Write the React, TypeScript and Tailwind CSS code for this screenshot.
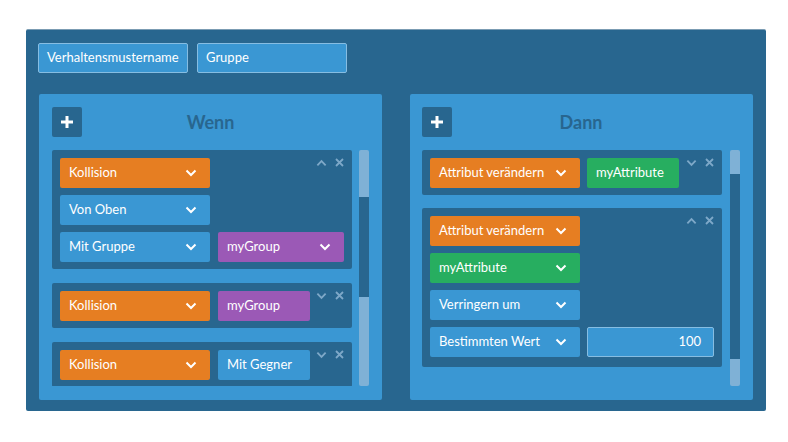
import React from 'react';

type Tone = 'orange' | 'blue' | 'purple' | 'green';

const toneBg: Record<Tone, string> = {
  orange: 'bg-[#e67e22]',
  blue: 'bg-[#3a97d3]',
  purple: 'bg-[#9b59b6]',
  green: 'bg-[#27ae60]',
};

function Chevron({ up = false, className = '' }: { up?: boolean; className?: string }) {
  return (
    <svg width="12" height="8" viewBox="0 0 12 8" className={className}>
      <path
        d={up ? 'M1.5 6.5 L6 2 L10.5 6.5' : 'M1.5 1.5 L6 6 L10.5 1.5'}
        fill="none"
        stroke="currentColor"
        strokeWidth="2"
      />
    </svg>
  );
}

function Close() {
  return (
    <svg width="9" height="9" viewBox="0 0 9 9">
      <path d="M1 1 L8 8 M8 1 L1 8" fill="none" stroke="currentColor" strokeWidth="1.8" />
    </svg>
  );
}

function Select({ label, tone, w = 'w-[150px]', arrow = true }: { label: string; tone: Tone; w?: string; arrow?: boolean }) {
  return (
    <div className={`${w} h-[30px] ${toneBg[tone]} rounded-[2px] flex items-center justify-between pl-[9px] pr-[13px] text-[13px] text-white shrink-0`}>
      <span>{label}</span>
      {arrow && <Chevron className="text-white" />}
    </div>
  );
}

function CardTools({ up }: { up: boolean }) {
  return (
    <div className="absolute top-[8px] right-[8px] flex items-center gap-[8px] text-[#7ea8c8]">
      <Chevron up={up} className="w-[11px]" />
      <Close />
    </div>
  );
}

function Card({ children, up = false, pb = 'pb-[7px]' }: { children: React.ReactNode; up?: boolean; pb?: string }) {
  return (
    <div className={`relative bg-[#28668f] rounded-[2px] pt-[8px] ${pb} px-[8px] flex flex-col gap-[7px] shrink-0`}>
      {children}
      <CardTools up={up} />
    </div>
  );
}

function Scrollbar({ before, thumb }: { before: string; thumb: string }) {
  return (
    <div className="w-[10px] h-[236px] bg-[#7fb1d6] rounded-[2px] flex flex-col shrink-0">
      <div className={before} />
      <div className={`${thumb} bg-[#28668f]`} />
    </div>
  );
}

function Panel({ title, children, pad = 'pl-[13px]', gap = 'gap-[7px]' }: { title: string; children: React.ReactNode; pad?: string; gap?: string }) {
  return (
    <div className={`w-[343px] h-[306px] bg-[#3a97d3] rounded-[2px] pt-[13px] pr-[13px] ${pad} flex flex-col gap-[13px]`}>
      <div className="flex items-center h-[30px]">
        <button className="w-[30px] h-[30px] bg-[#28668f] rounded-[2px] flex items-center justify-center">
          <svg width="14" height="14" viewBox="0 0 14 14">
            <path d="M7 1 V13 M1 7 H13" stroke="white" strokeWidth="3" />
          </svg>
        </button>
        <h2 className="flex-1 text-center text-[18px] font-bold text-[#28668f]">{title}</h2>
        <div className="w-[30px]" />
      </div>
      <div className={`flex ${gap} h-[236px]`}>{children}</div>
    </div>
  );
}

export default function App() {
  return (
    <div className="w-[788px] h-[442px] bg-white pt-[29px] pl-[26px]" style={{ fontFamily: 'Lato, "Noto Sans", sans-serif' }}>
      <div className="w-[740px] h-[382px] bg-[#28668f] border-t border-[#7b9cb3] rounded-[2px] px-[12px] pt-[13px]">
        <div className="flex gap-[9px]">
          <div className="w-[150px] h-[30px] bg-[#3a97d3] border border-[#86bde2] rounded-[2px] flex items-center px-[8px] text-[13px] text-white">
            Verhaltensmustername
          </div>
          <div className="w-[150px] h-[30px] bg-[#3a97d3] border border-[#86bde2] rounded-[2px] flex items-center px-[8px] text-[13px] text-white">
            Gruppe
          </div>
        </div>

        <div className="flex gap-[28px] mt-[21px] ml-[1px]">
          {/* Wenn */}
          <Panel title="Wenn">
            <div className="w-[300px] flex flex-col gap-[14px] overflow-hidden">
              <Card up>
                <Select label="Kollision" tone="orange" />
                <Select label="Von Oben" tone="blue" />
                <div className="flex gap-[8px]">
                  <Select label="Mit Gruppe" tone="blue" />
                  <Select label="myGroup" tone="purple" w="w-[126px]" />
                </div>
              </Card>
              <Card>
                <div className="flex gap-[8px]">
                  <Select label="Kollision" tone="orange" />
                  <Select label="myGroup" tone="purple" w="w-[92px]" arrow={false} />
                </div>
              </Card>
              <Card>
                <div className="flex gap-[8px]">
                  <Select label="Kollision" tone="orange" />
                  <Select label="Mit Gegner" tone="blue" w="w-[92px]" arrow={false} />
                </div>
              </Card>
            </div>
            <Scrollbar before="h-[47px]" thumb="h-[100px]" />
          </Panel>

          {/* Dann */}
          <Panel title="Dann" pad="pl-[12px]" gap="gap-[8px]">
            <div className="w-[300px] flex flex-col gap-[13px] overflow-hidden">
              <Card>
                <div className="flex gap-[7px]">
                  <Select label="Attribut verändern" tone="orange" />
                  <Select label="myAttribute" tone="green" w="w-[92px]" arrow={false} />
                </div>
              </Card>
              <Card up pb="pb-[10px]">
                <Select label="Attribut verändern" tone="orange" />
                <Select label="myAttribute" tone="green" />
                <Select label="Verringern um" tone="blue" />
                <div className="flex gap-[7px]">
                  <Select label="Bestimmten Wert" tone="blue" />
                  <div className="w-[127px] h-[30px] bg-[#3a97d3] border border-[#86bde2] rounded-[2px] flex items-center justify-end pr-[12px] text-[13px] text-white">
                    100
                  </div>
                </div>
              </Card>
            </div>
            <Scrollbar before="h-[24px]" thumb="h-[185px]" />
          </Panel>
        </div>
      </div>
    </div>
  );
}
